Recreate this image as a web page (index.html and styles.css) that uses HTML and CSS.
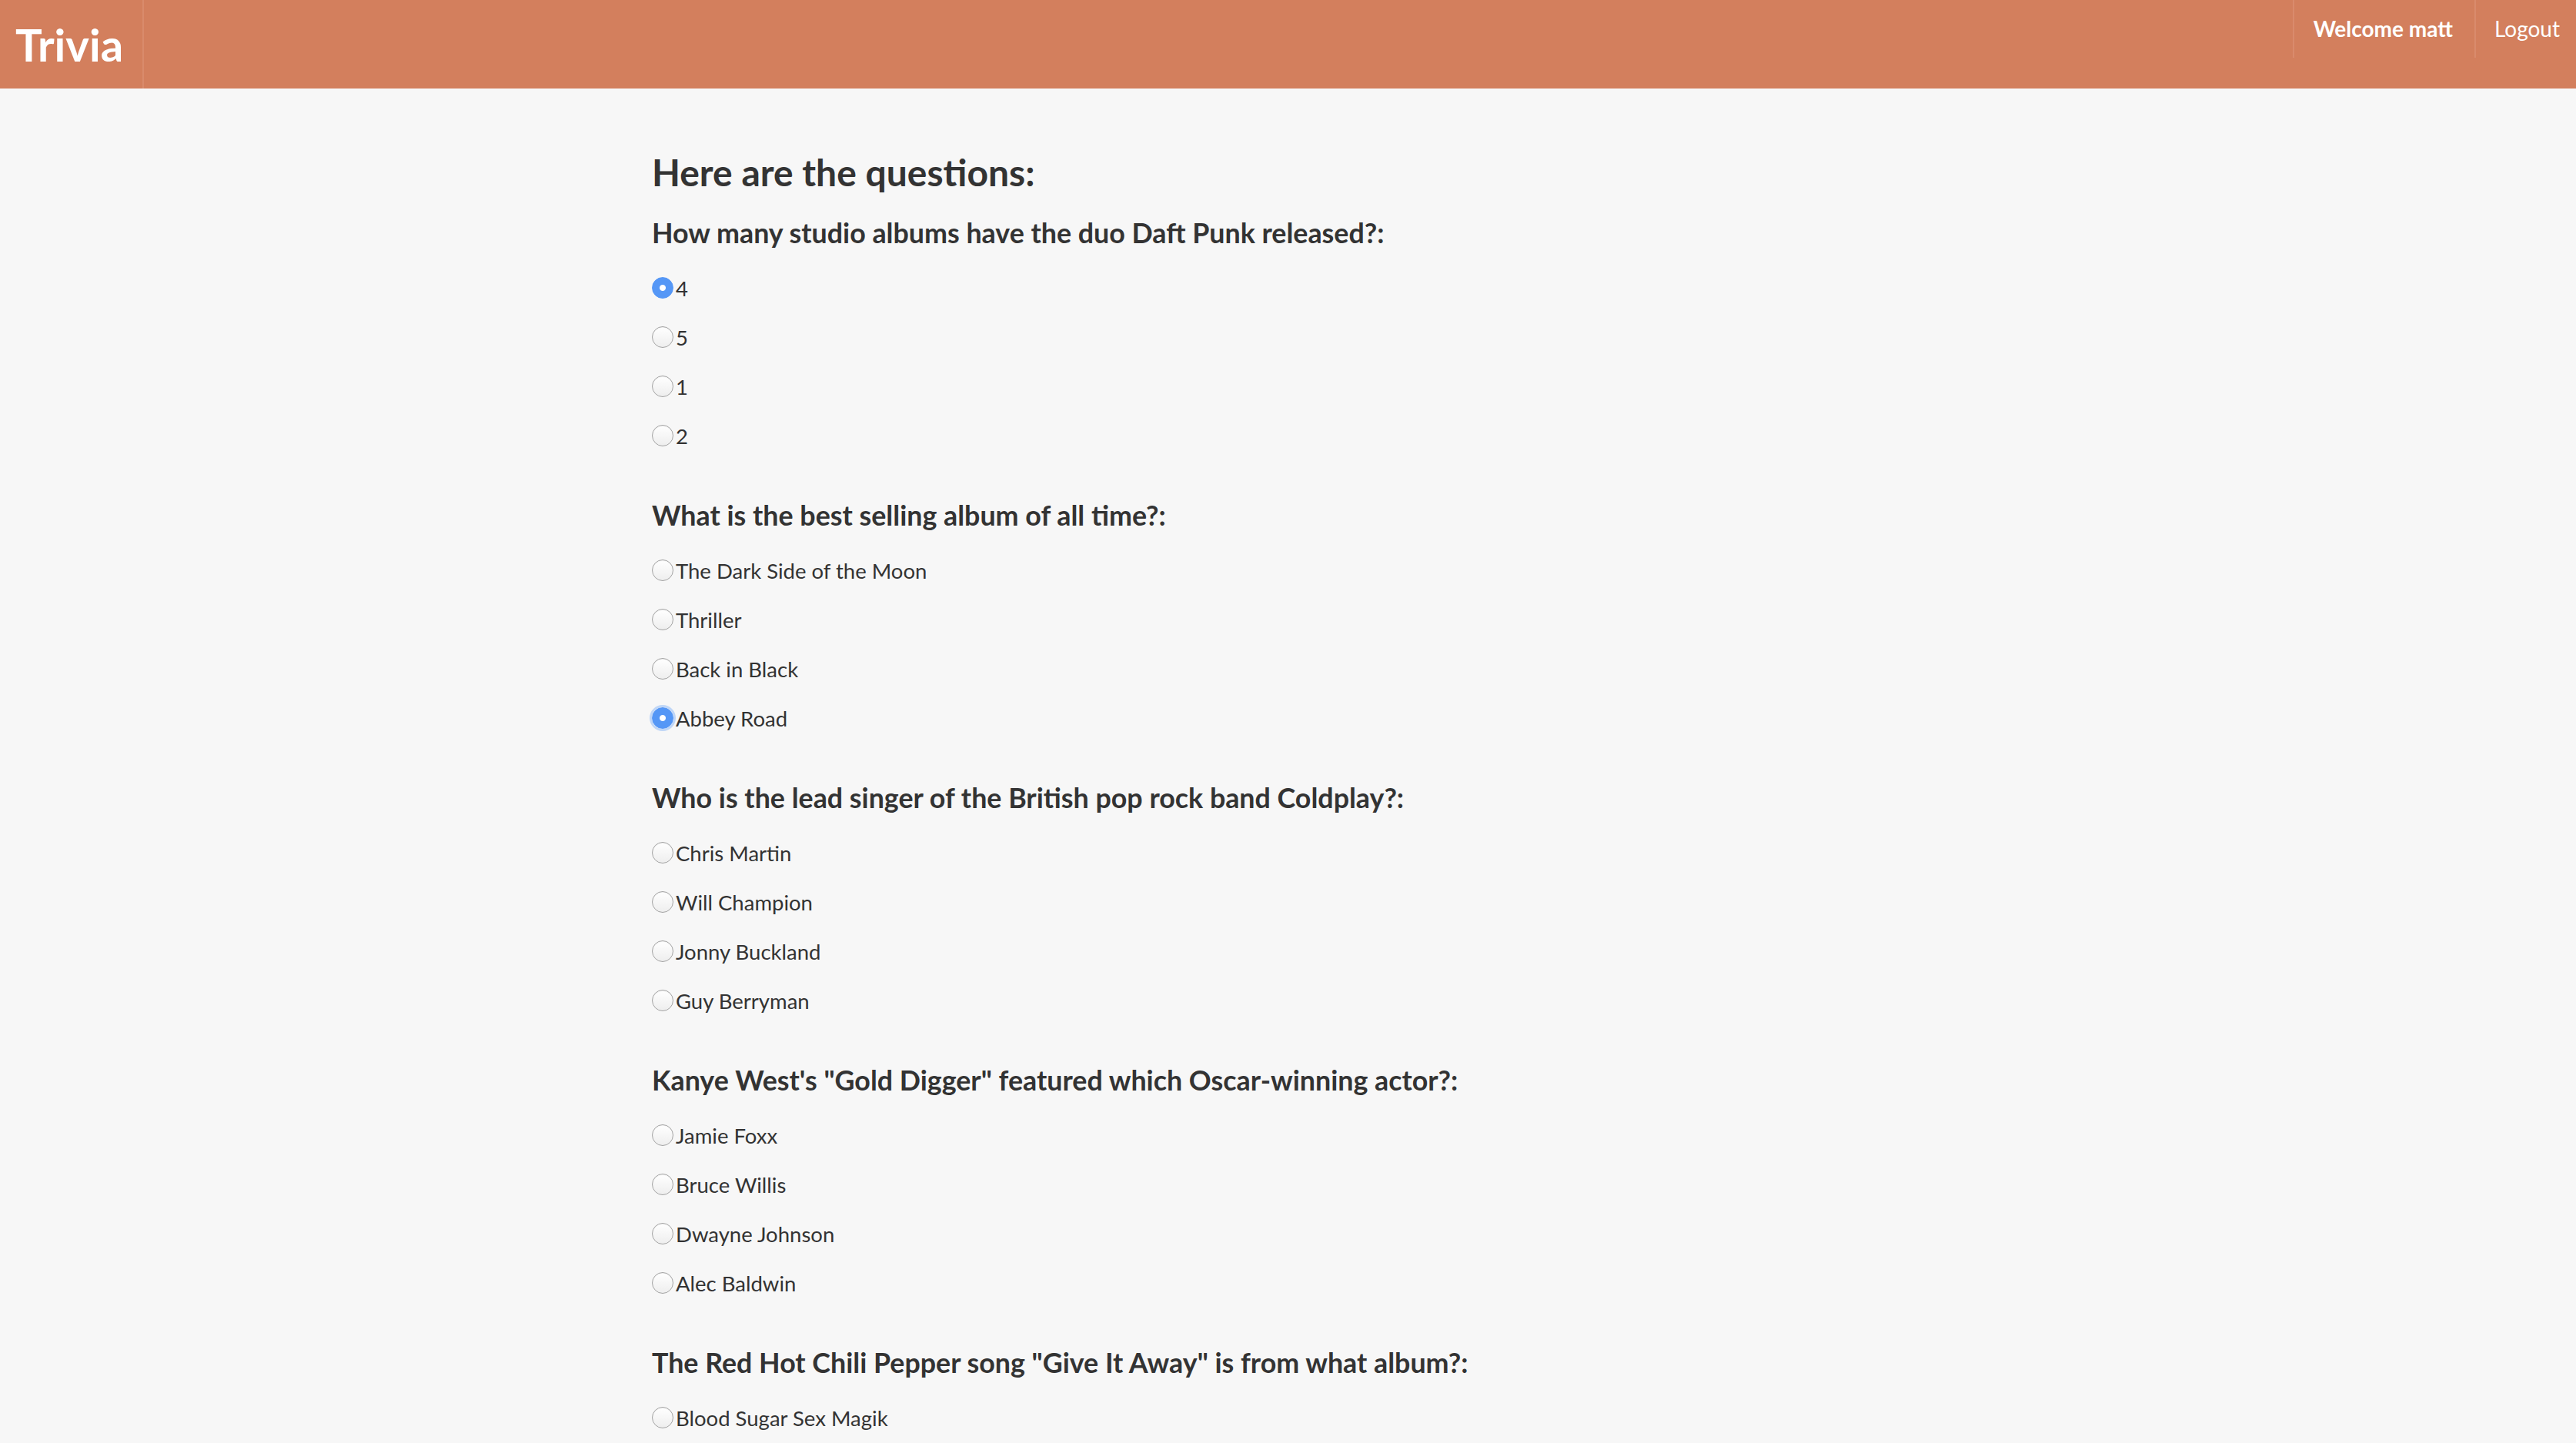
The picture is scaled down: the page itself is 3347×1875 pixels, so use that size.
FILE: index.html
```html
<!DOCTYPE html>
<html lang="en">
<head>
<meta charset="utf-8">
<title>Trivia</title>
<link rel="stylesheet" href="styles.css">
</head>
<body>
<nav class="navbar">
  <a class="brand" href="#">Trivia</a>
  <ul class="nav">
    <li class="nav-item nav-welcome">Welcome matt</li>
    <li class="nav-item nav-logout"><a href="#">Logout</a></li>
  </ul>
</nav>
<main class="main">
  <h2 class="page-title">Here are the questions:</h2>
  <form class="quiz">
    <fieldset class="question">
      <legend class="question-title">How many studio albums have the duo Daft Punk released?:</legend>
      <div class="options">
        <label class="option"><input type="radio" name="q1" checked><span>4</span></label>
        <label class="option"><input type="radio" name="q1"><span>5</span></label>
        <label class="option"><input type="radio" name="q1"><span>1</span></label>
        <label class="option"><input type="radio" name="q1"><span>2</span></label>
      </div>
    </fieldset>
    <fieldset class="question">
      <legend class="question-title">What is the best selling album of all time?:</legend>
      <div class="options">
        <label class="option"><input type="radio" name="q2"><span>The Dark Side of the Moon</span></label>
        <label class="option"><input type="radio" name="q2"><span>Thriller</span></label>
        <label class="option"><input type="radio" name="q2"><span>Back in Black</span></label>
        <label class="option"><input type="radio" name="q2" class="focused" checked><span>Abbey Road</span></label>
      </div>
    </fieldset>
    <fieldset class="question">
      <legend class="question-title">Who is the lead singer of the British pop rock band Coldplay?:</legend>
      <div class="options">
        <label class="option"><input type="radio" name="q3"><span>Chris Martin</span></label>
        <label class="option"><input type="radio" name="q3"><span>Will Champion</span></label>
        <label class="option"><input type="radio" name="q3"><span>Jonny Buckland</span></label>
        <label class="option"><input type="radio" name="q3"><span>Guy Berryman</span></label>
      </div>
    </fieldset>
    <fieldset class="question">
      <legend class="question-title">Kanye West's "Gold Digger" featured which Oscar-winning actor?:</legend>
      <div class="options">
        <label class="option"><input type="radio" name="q4"><span>Jamie Foxx</span></label>
        <label class="option"><input type="radio" name="q4"><span>Bruce Willis</span></label>
        <label class="option"><input type="radio" name="q4"><span>Dwayne Johnson</span></label>
        <label class="option"><input type="radio" name="q4"><span>Alec Baldwin</span></label>
      </div>
    </fieldset>
    <fieldset class="question">
      <legend class="question-title">The Red Hot Chili Pepper song "Give It Away" is from what album?:</legend>
      <div class="options">
        <label class="option"><input type="radio" name="q5"><span>Blood Sugar Sex Magik</span></label>
      </div>
    </fieldset>
  </form>
</main>
</body>
</html>
```
FILE: styles.css
```css
html {
  scrollbar-width: none;
}
html::-webkit-scrollbar {
  display: none;
}
* {
  box-sizing: border-box;
}
body {
  margin: 0;
  background: #f7f7f7;
  color: #333333;
  font-family: Lato, "Open Sans", "Liberation Sans", sans-serif;
}
.navbar {
  display: flex;
  justify-content: space-between;
  align-items: flex-start;
  height: 115px;
  background: #d37f5d;
}
.brand {
  display: flex;
  align-items: center;
  width: 187px;
  height: 115px;
  padding-left: 20px;
  border-right: 2px solid #d98b6c;
  color: #ffffff;
  font-size: 58px;
  font-weight: 700;
  text-decoration: none;
}
.nav {
  display: flex;
  margin: 0;
  padding: 0;
  list-style: none;
}
.nav-item {
  height: 75px;
  line-height: 75px;
  border-left: 2px solid #d98b6c;
  color: #ffffff;
  font-size: 28px;
}
.nav-item a {
  color: #ffffff;
  text-decoration: none;
}
.nav-welcome {
  padding: 0 28px 0 25px;
  font-weight: 700;
}
.nav-logout {
  padding: 0 21px 0 24px;
}
.main {
  padding: 81px 0 0 847px;
}
.page-title {
  margin: 0 0 27px;
  font-size: 48px;
  line-height: 56px;
  font-weight: 700;
}
.quiz {
  margin: 0;
}
.question {
  margin: 0 0 48px;
  padding: 0;
  border: 0;
  min-width: 0;
}
.question-title {
  padding: 0;
  font-size: 35.8px;
  line-height: 48px;
  font-weight: 700;
}
.options {
  display: flex;
  flex-direction: column;
  margin-top: 15px;
}
.option {
  display: flex;
  align-items: center;
  height: 64px;
  font-size: 27.5px;
  cursor: pointer;
}
.option span {
  margin-left: 3px;
}
.option input {
  appearance: none;
  -webkit-appearance: none;
  flex: none;
  width: 28px;
  height: 28px;
  margin: 0;
  border: 1.5px solid #a3a3a3;
  border-radius: 50%;
  background: linear-gradient(#ffffff, #eeeeee);
  box-shadow: inset 0 1px 1px rgba(0, 0, 0, 0.06);
}
.option input:checked {
  border-color: #5597f6;
  background: radial-gradient(circle, #ffffff 0 3.5px, #5597f6 4.5px);
  box-shadow: none;
}
.option input.focused {
  box-shadow: 0 0 0 3px rgba(85, 151, 246, 0.35);
}
```
